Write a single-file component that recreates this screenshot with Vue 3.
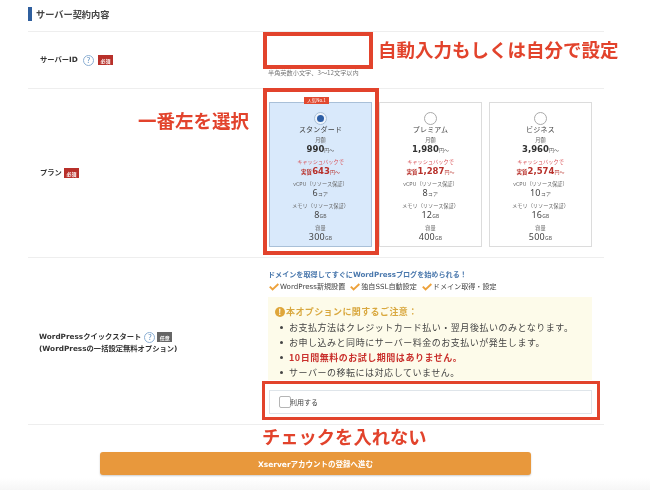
<script setup>
const plans = [
  { name: 'スタンダード', price: '990', cash: '643', cpu: '6', mem: '8', disk: '300', on: true },
  { name: 'プレミアム', price: '1,980', cash: '1,287', cpu: '8', mem: '12', disk: '400' },
  { name: 'ビジネス', price: '3,960', cash: '2,574', cpu: '10', mem: '16', disk: '500' },
]
const notes = [
  { t: 'お支払方法はクレジットカード払い・翌月後払いのみとなります。' },
  { t: 'お申し込みと同時にサーバー料金のお支払いが発生します。' },
  { t: '10日間無料のお試し期間はありません。', warn: true },
  { t: 'サーバーの移転には対応していません。' },
]
const feats = ['WordPress新規設置', '独自SSL自動設定', 'ドメイン取得・設定']
</script>

<template>
  <div class="page">
    <section class="form">
      <h2 class="title">サーバー契約内容</h2>

      <div class="row row-id">
        <div class="label">
          <span class="lbl-text">サーバーID</span>
          <span class="help">?</span>
          <span class="tag">必須</span>
        </div>
        <div class="field">
          <p class="hint">半角英数小文字、3〜12文字以内</p>
        </div>
      </div>

      <div class="row row-plan">
        <div class="label">
          <span class="lbl-text">プラン</span>
          <span class="tag">必須</span>
        </div>
        <div class="cards">
          <div v-for="p in plans" :key="p.name" class="card" :class="{ on: p.on }">
            <span v-if="p.on" class="badge">人気No.1</span>
            <span class="radio"><i v-if="p.on"></i></span>
            <div class="pname">{{ p.name }}</div>
            <div class="cap first">月額</div>
            <div class="price">{{ p.price }}<small>円〜</small></div>
            <div class="cap red gap">キャッシュバックで</div>
            <div class="price red"><small class="pre">実質</small>{{ p.cash }}<small>円〜</small></div>
            <div class="cap gap">vCPU（リソース保証）</div>
            <div class="spec">{{ p.cpu }}<small>コア</small></div>
            <div class="cap gap">メモリ（リソース保証）</div>
            <div class="spec">{{ p.mem }}<small>GB</small></div>
            <div class="cap gap">容量</div>
            <div class="spec">{{ p.disk }}<small>GB</small></div>
          </div>
        </div>
      </div>

      <div class="row row-wp">
        <div class="wp-label">
          <div class="wp-line">
            <span class="lbl-text">WordPressクイックスタート</span>
            <span class="help">?</span>
            <span class="tag grey">任意</span>
          </div>
          <div class="lbl-text">(WordPressの一括設定無料オプション)</div>
        </div>
        <div class="wp-field">
          <p class="lead">ドメインを取得してすぐにWordPressブログを始められる！</p>
          <ul class="feats">
            <li v-for="f in feats" :key="f">
              <svg width="10" height="8" viewBox="0 0 10 8"><path d="M.8 3.6 3.6 6.4 9.4 1" fill="none" stroke="#eda23c" stroke-width="2"/></svg>{{ f }}
            </li>
          </ul>
          <div class="notice">
            <div class="notice-head"><span class="excl">!</span>本オプションに関するご注意：</div>
            <ul class="notes">
              <li v-for="n in notes" :key="n.t" :class="{ warn: n.warn }">{{ n.t }}</li>
            </ul>
          </div>
          <div class="use">
            <span class="check"></span>
            <span class="use-text">利用する</span>
          </div>
        </div>
      </div>

      <div class="cta"><button class="submit">Xserverアカウントの登録へ進む</button></div>
    </section>

    <div class="mark m-id"></div>
    <div class="mark m-plan"></div>
    <div class="mark m-use"></div>
    <div class="note n-id">自動入力もしくは自分で設定</div>
    <div class="note n-plan">一番左を選択</div>
    <div class="note n-use">チェックを入れない</div>
  </div>
</template>

<style>
html, body { margin: 0; background: #fff; }
</style>

<style scoped>
.page {
  position: relative;
  width: 650px;
  height: 490px;
  overflow: hidden;
  background: linear-gradient(#fff 478px, #f6f6f6 490px);
  font-family: "Noto Sans CJK JP", "Noto Sans", sans-serif;
  color: #333;
  filter: blur(.3px);
}
.form { width: 576px; margin-left: 28px; }
p, h2, ul { margin: 0; padding: 0; }
ul { list-style: none; }

.title {
  position: relative;
  height: 31px;
  box-sizing: border-box;
  padding: 7px 0 0 8px;
  font-size: 9.2px;
  line-height: 14px;
  font-weight: 700;
  color: #444;
}
.title::before {
  content: "";
  position: absolute;
  left: 0;
  top: 7px;
  width: 4px;
  height: 14px;
  background: #2f5f9e;
}

.row {
  display: grid;
  grid-template-columns: 241px 1fr;
  border-top: 1px solid #eeeeee;
  box-sizing: border-box;
}
.row-id { height: 57px; }
.row-plan { height: 169px; }
.row-wp { height: 168px; border-bottom: 1px solid #eee; }

.label {
  padding-left: 12px;
  display: flex;
  align-items: center;
  gap: 2px;
}
.lbl-text {
  font-family: "DejaVu Sans", "Noto Sans CJK JP", sans-serif;
  font-weight: 700;
  color: #333;
  font-size: 7.3px;
  line-height: 12px;
  white-space: nowrap;
}
.help {
  display: inline-flex;
  align-items: center;
  justify-content: center;
  box-sizing: border-box;
  width: 11px;
  height: 11px;
  border: 1px solid #8db0d4;
  border-radius: 50%;
  color: #5f8fbf;
  font-size: 8px;
  line-height: 1;
  margin: 0 2px 0 3px;
}
.tag {
  display: inline-flex;
  align-items: center;
  justify-content: center;
  width: 15px;
  height: 10px;
  background: #b8302a;
  color: #fff;
  font-size: 5px;
  font-weight: 700;
}
.tag.grey { background: #666; }

.field { padding-top: 36px; }
.hint { font-size: 6.2px; line-height: 9px; color: #777; margin-left: -1px; }

.cards {
  display: grid;
  grid-template-columns: repeat(3, 103px);
  gap: 7px;
  padding-top: 13px;
}
.card {
  position: relative;
  height: 145px;
  box-sizing: border-box;
  border: 1px solid #dcdcdc;
  text-align: center;
  padding-top: 9px;
  color: #444;
  background: #fff;
}
.card.on { background: #d9e9fb; border-color: #a9c0d8; }
.badge {
  position: absolute;
  top: -6px;
  left: 34px;
  width: 25px;
  height: 7px;
  background: #e2492f;
  color: #fff;
  font-size: 4.5px;
  line-height: 7px;
  white-space: nowrap;
}
.radio {
  display: flex;
  align-items: center;
  justify-content: center;
  box-sizing: border-box;
  width: 13px;
  height: 13px;
  margin: 0 auto;
  border: 1px solid #aaa;
  border-radius: 50%;
  background: #fff;
}
.radio i { width: 7px; height: 7px; border-radius: 50%; background: #2c5ea6; }
.on .radio { border-color: #a9c0d8; background: #eef4fb; }
.pname { font-size: 7px; line-height: 10px; margin-top: -1px; color: #444; letter-spacing: .2px; }
.cap { font-size: 5.2px; line-height: 8px; color: #666; white-space: nowrap; }
.cap.first { margin-top: 2px; }
.cap.gap { margin-top: 3.1px; }
.cap.red { color: #d9555a; }
.price {
  font-size: 8.5px;
  line-height: 10px;
  font-weight: 700;
  font-family: "DejaVu Sans", "Noto Sans CJK JP", sans-serif;
  color: #333;
}
.price.red { color: #b8302a; }
.price small { font-size: 5px; font-weight: 400; color: #555; font-family: "Noto Sans CJK JP", sans-serif; }
.price.red small { color: #b8302a; }
.price small.pre { font-weight: 700; font-size: 5.5px; }
.spec { font-size: 9px; line-height: 10px; color: #444; font-family: "Noto Sans", sans-serif; letter-spacing: .2px; }
.spec small { font-size: 5px; color: #555; }

.wp-label { padding: 73px 0 0 11px; }
.wp-line { display: flex; align-items: center; height: 12px; }
.wp-field { padding-top: 11px; margin-left: -1px; }
.lead {
  font-family: "DejaVu Sans", "Noto Sans CJK JP", sans-serif;
  font-size: 7.1px;
  line-height: 11px;
  font-weight: 700;
  color: #4a78ad;
  white-space: nowrap;
}
.feats {
  display: flex;
  gap: 4px;
  margin-top: 1px;
  font-family: "DejaVu Sans", "Noto Sans CJK JP", sans-serif;
  font-size: 7.1px;
  line-height: 11px;
  color: #444;
}
.feats li { display: flex; align-items: center; gap: 1px; margin-left: 1px; white-space: nowrap; }
.notice {
  margin-top: 5px;
  width: 324px;
  height: 83px;
  box-sizing: border-box;
  background: #fdfbea;
  padding: 8px 7px 0;
  overflow: hidden;
}
.notice-head { display: flex; align-items: center; font-size: 9px; line-height: 13px; font-weight: 700; color: #d9a83f; letter-spacing: .4px; }
.excl {
  display: inline-flex;
  align-items: center;
  justify-content: center;
  width: 10px;
  height: 10px;
  border-radius: 50%;
  background: #dfa63a;
  color: #fff;
  font-size: 8px;
  margin-right: 1px;
}
.notes { margin-top: 2px; }
.notes li {
  font-size: 9px;
  line-height: 15px;
  letter-spacing: .52px;
  color: #444;
  padding-left: 14px;
  position: relative;
  white-space: nowrap;
}
.notes li::before {
  content: "";
  position: absolute;
  left: 5px;
  top: 6px;
  width: 3px;
  height: 3px;
  border-radius: 50%;
  background: #444;
}
.notes li.warn { color: #c9302c; font-weight: 700; }
.use {
  display: flex;
  align-items: center;
  width: 323px;
  height: 24px;
  margin-top: 10px;
  margin-left: 1px;
  box-sizing: border-box;
  border: 1px solid #dfe5ea;
  background: #fff;
  padding-left: 9px;
}
.check {
  box-sizing: border-box;
  width: 12px;
  height: 12px;
  border: 1px solid #b5b5b5;
  border-radius: 2px;
  background: #fff;
}
.use-text { font-size: 7px; color: #444; margin-left: -1px; }

.cta { padding-top: 27px; margin-left: 72px; width: 431px; }
.submit {
  display: block;
  width: 431px;
  height: 23px;
  border: 0;
  border-radius: 3px;
  background: #e8983c;
  box-shadow: 0 1px 2px rgba(0,0,0,.2);
  color: #fff;
  font: 700 7.5px "DejaVu Sans", "Noto Sans CJK JP", sans-serif;
  padding: 0;
}

.mark { position: absolute; border: 4px solid #e2432c; box-sizing: border-box; }
.m-id { left: 263px; top: 32px; width: 110px; height: 37px; }
.m-plan { left: 263px; top: 88px; width: 116px; height: 167px; }
.m-use { left: 262px; top: 381px; width: 338px; height: 39px; border-width: 3px; }
.note { position: absolute; color: #e2432c; font-weight: 700; white-space: nowrap; line-height: 1; }
.n-id { left: 378px; top: 40px; font-size: 18.5px; }
.n-plan { left: 138px; top: 111px; font-size: 18.5px; }
.n-use { left: 262px; top: 427px; font-size: 18.3px; }
</style>
